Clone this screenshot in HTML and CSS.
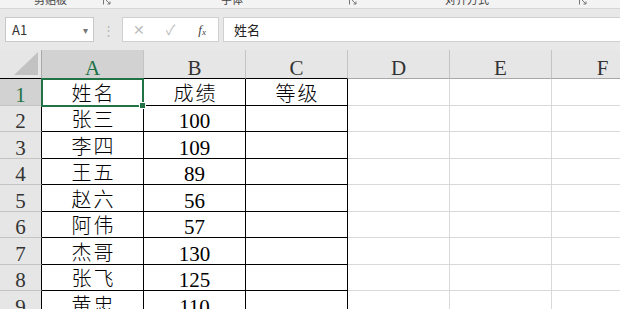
FILE: index.html
```html
<!DOCTYPE html>
<html lang="zh">
<head>
    <meta charset="UTF-8">
    <title>成绩表</title>
    <link rel="stylesheet" href="styles.css">
</head>
<body>

<div class="ribbon">
    <span class="group-label clip">剪贴板</span>
    <span class="launcher l1"><svg width="8" height="8" viewBox="0 0 8 8"><path d="M0.5 7.5V0.5H7.5M3 3L7 7M7 4.5V7H4.5" fill="none" stroke="#777" stroke-width="1"/></svg></span>
    <span class="group-label font">字体</span>
    <span class="launcher l2"><svg width="8" height="8" viewBox="0 0 8 8"><path d="M0.5 7.5V0.5H7.5M3 3L7 7M7 4.5V7H4.5" fill="none" stroke="#777" stroke-width="1"/></svg></span>
    <span class="group-label align">对齐方式</span>
    <span class="launcher l3"><svg width="8" height="8" viewBox="0 0 8 8"><path d="M0.5 7.5V0.5H7.5M3 3L7 7M7 4.5V7H4.5" fill="none" stroke="#777" stroke-width="1"/></svg></span>
</div>

<div class="formula-bar">
    <div class="name-box">
        <span>A1</span>
        <span class="caret">▾</span>
    </div>
    <div class="grip">⋮</div>
    <div class="fx-buttons">
        <span class="btn-muted">✕</span>
        <span class="btn-muted">✓</span>
        <span class="fx">f<sub>x</sub></span>
    </div>
    <div class="formula-input">姓名</div>
</div>

<div class="sheet">
    <table class="grid">
        <colgroup>
            <col class="c-head">
            <col class="c-col"><col class="c-col"><col class="c-col">
            <col class="c-col"><col class="c-col"><col class="c-col">
        </colgroup>
        <thead>
            <tr class="head-row">
                <th class="corner"><span class="tri"></span></th>
                <th class="col-head sel">A</th>
                <th class="col-head">B</th>
                <th class="col-head">C</th>
                <th class="col-head">D</th>
                <th class="col-head">E</th>
                <th class="col-head">F</th>
            </tr>
        </thead>
        <tbody id="rows">
            <tr>
                <th class="row-head sel">1</th>
                <td class="box cn active">姓名<div class="selection"><span class="handle"></span></div></td>
                <td class="box cn">成绩</td>
                <td class="box cn">等级</td>
                <td></td><td></td><td></td>
            </tr>
            <tr><th class="row-head">2</th><td class="box cn">张三</td><td class="box">100</td><td class="box"></td><td></td><td></td><td></td></tr>
            <tr><th class="row-head">3</th><td class="box cn">李四</td><td class="box">109</td><td class="box"></td><td></td><td></td><td></td></tr>
            <tr><th class="row-head">4</th><td class="box cn">王五</td><td class="box">89</td><td class="box"></td><td></td><td></td><td></td></tr>
            <tr><th class="row-head">5</th><td class="box cn">赵六</td><td class="box">56</td><td class="box"></td><td></td><td></td><td></td></tr>
            <tr><th class="row-head">6</th><td class="box cn">阿伟</td><td class="box">57</td><td class="box"></td><td></td><td></td><td></td></tr>
            <tr><th class="row-head">7</th><td class="box cn">杰哥</td><td class="box">130</td><td class="box"></td><td></td><td></td><td></td></tr>
            <tr><th class="row-head">8</th><td class="box cn">张飞</td><td class="box">125</td><td class="box"></td><td></td><td></td><td></td></tr>
            <tr><th class="row-head">9</th><td class="box cn">黄忠</td><td class="box">110</td><td class="box"></td><td></td><td></td><td></td></tr>
        </tbody>
    </table>
</div>

</body>
</html>
```

FILE: styles.css
```css
body {
    margin: 0;
    padding: 0;
    width: 620px;
    height: 309px;
    overflow: hidden;
    background-color: #fff;
    font-family: "Noto Sans CJK SC", sans-serif;
}

/* ribbon strip, only its bottom edge is visible */
.ribbon {
    display: flex;
    align-items: flex-end;
    height: 8px;
    overflow: hidden;
    background-color: #f3f3f3;
    border-bottom: 1px solid #d6d6d6;
}
.group-label {
    font-size: 11px;
    line-height: 14px;
    color: #444;
    margin-bottom: 2px;
    white-space: nowrap;
}
.clip { margin-left: 34px; }
.font { margin-left: 110px; }
.align { margin-left: 88px; }
.launcher {
    display: flex;
    height: 12px;
    align-items: flex-end;
    margin-bottom: 3px;
}
.l1 { margin-left: 36px; }
.l2 { margin-left: 106px; }
.l3 { margin-left: 90px; }

/* formula bar */
.formula-bar {
    display: flex;
    align-items: stretch;
    height: 25px;
    padding: 8px 0 8px 5px;
    background-color: #e8e8e8;
}
.name-box {
    display: flex;
    align-items: center;
    justify-content: space-between;
    width: 89px;
    box-sizing: border-box;
    padding: 0 5px 0 6px;
    background-color: #fff;
    border: 1px solid #c8c8c8;
    font-size: 13px;
    color: #333;
}
.caret {
    font-size: 10px;
    color: #777;
}
.grip {
    width: 28px;
    text-align: center;
    line-height: 25px;
    font-size: 13px;
    color: #b8b8b8;
}
.fx-buttons {
    display: flex;
    width: 97px;
    box-sizing: border-box;
    background-color: #fff;
    border: 1px solid #d0d0d0;
}
.fx-buttons span {
    width: 32px;
    text-align: center;
    line-height: 23px;
}
.btn-muted {
    font-size: 14px;
    color: #bdbdbd;
}
.fx {
    font-family: "Liberation Serif", serif;
    font-style: italic;
    font-size: 13px;
    color: #444;
}
.fx sub {
    font-size: 9px;
    vertical-align: -1px;
}
.formula-input {
    flex: 1;
    margin-left: 4px;
    padding-left: 10px;
    background-color: #fff;
    border: 1px solid #d0d0d0;
    border-right: none;
    font-size: 13px;
    line-height: 23px;
    color: #222;
}

/* worksheet grid */
.grid {
    table-layout: fixed;
    width: 654px;
    border-collapse: separate;
    border-spacing: 0;
    font-family: "Liberation Serif", "Noto Sans CJK SC", serif;
    font-size: 21px;
    line-height: 20px;
}
.c-head { width: 42px; }
.c-col { width: 102px; }
.grid th, .grid td {
    padding: 0;
    text-align: center;
    vertical-align: bottom;
    font-weight: normal;
    border-right: 1px solid #d9d9d9;
    border-bottom: 1px solid #d9d9d9;
    white-space: nowrap;
}
.grid tr { height: 26.5px; }
.grid .head-row { height: 29px; }
.grid tbody td { color: #000; }
.grid td.cn {
    font-size: 20px;
    font-weight: 300;
    letter-spacing: 2px;
    text-indent: 2px;
    padding-bottom: 1px;
}

.col-head, .row-head, .corner {
    background-color: #e6e6e6;
    color: #333;
}
.grid .col-head {
    border-right-color: #c4c4c4;
    border-bottom-color: #a8a8a8;
}
.grid .row-head {
    border-bottom-color: #c4c4c4;
    border-right-color: #000;
}
.grid .sel {
    background-color: #d2d2d2;
    color: #217346;
}
.grid .corner {
    border-right-color: #a8a8a8;
    border-bottom-color: #a8a8a8;
    vertical-align: bottom;
    text-align: right;
    padding: 0 3px 3px 0;
    line-height: 0;
}
.tri {
    display: inline-block;
    width: 0;
    height: 0;
    border-left: 24px solid transparent;
    border-bottom: 23px solid #c2c2c2;
}
.grid td.box {
    border-right-color: #000;
    border-bottom-color: #000;
}
.grid .head-row th:nth-child(-n+4) {
    border-bottom-color: #000;
}

/* active cell */
.active { position: relative; }
.selection {
    position: absolute;
    left: -1px;
    top: -1px;
    right: -1px;
    bottom: -2px;
    border: 2px solid #217346;
}
.handle {
    position: absolute;
    right: -4px;
    bottom: -4px;
    width: 5px;
    height: 5px;
    background-color: #217346;
    border: 1px solid #fff;
}
```
